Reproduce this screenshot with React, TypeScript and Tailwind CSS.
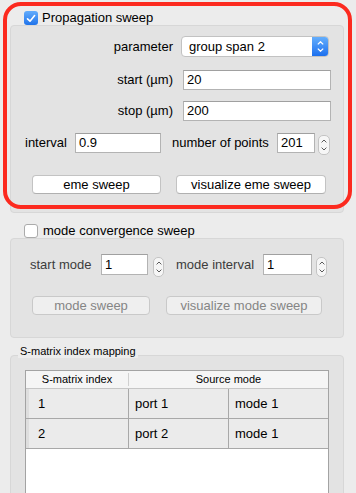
import React from "react";

function CheckedBox() {
  return (
    <div className="w-[14px] h-[14px] rounded-[3px] bg-gradient-to-b from-[#62acfc] to-[#1f73ea] flex items-center justify-center shrink-0">
      <svg width="10" height="9" viewBox="0 0 10 9">
        <path d="M1.5 4.8 L4 7.2 L8.6 1.6" stroke="white" strokeWidth="1.6" fill="none" strokeLinecap="round" strokeLinejoin="round" />
      </svg>
    </div>
  );
}

function EmptyBox() {
  return <div className="w-[14px] h-[14px] rounded-[3px] bg-white border border-[#ababab] shrink-0" />;
}

function Stepper({ className }: { className: string }) {
  return (
    <div className={"flex flex-col items-center justify-between h-[20px] rounded-[5px] border border-[#c4c4c4] bg-[#f6f6f6] py-[3px] shrink-0 " + className}>
      <svg width="6" height="4" viewBox="0 0 6 4">
        <path d="M0.6 3.4 L3 1 L5.4 3.4" stroke="#5a5a5a" fill="none" strokeWidth="1" />
      </svg>
      <svg width="6" height="4" viewBox="0 0 6 4">
        <path d="M0.6 0.6 L3 3 L5.4 0.6" stroke="#5a5a5a" fill="none" strokeWidth="1" />
      </svg>
    </div>
  );
}

function Input({ value, className }: { value: string; className: string }) {
  return (
    <div className={"h-[20px] bg-white border border-[#b3b3b3] border-t-[#a0a0a0] flex items-center pl-[3px] text-[13px] text-black shrink-0 " + className}>
      {value}
    </div>
  );
}

function Button({ label, className, disabled }: { label: string; className: string; disabled?: boolean }) {
  return (
    <div
      className={
        "h-[19px] rounded-[4px] border flex items-center justify-center text-[13px] shrink-0 " +
        (disabled
          ? "bg-[#efefef] border-[#c9c9c9] text-[#858585] "
          : "bg-white border-[#c3c3c3] border-b-[#b0b0b0] text-black ") +
        className
      }
    >
      {label}
    </div>
  );
}

export default function App() {
  return (
    <div className="relative w-[356px] h-[493px] overflow-hidden bg-[#ececec] font-['Liberation_Sans',Arial,sans-serif] text-[13px] text-black">
      <div className="pt-[11px]">
        {/* Section 1 title */}
        <div className="flex items-center h-[14px] pl-[24px] gap-[4px]">
          <CheckedBox />
          <span className="leading-[14px]">Propagation sweep</span>
        </div>
        {/* Panel 1 */}
        <div className="ml-[10px] w-[334px] h-[188px] bg-[#e3e3e3] border border-[#d7d7d7] rounded-[4px] pt-[10px]">
          <div className="flex items-center h-[21px]">
            <span className="w-[162px] text-right">parameter</span>
            <div className="ml-[8px] w-[148px] h-[21px] rounded-[4px] border border-[#c2c2c2] bg-white flex overflow-hidden">
              <span className="flex-1 pl-[7px] leading-[19px]">group span 2</span>
              <div className="w-[16px] h-full bg-gradient-to-b from-[#64aefc] to-[#1b6fee] flex flex-col items-center justify-center gap-[3px]">
                <svg width="7" height="4" viewBox="0 0 7 4">
                  <path d="M0.8 3.4 L3.5 0.8 L6.2 3.4" stroke="white" fill="none" strokeWidth="1.3" />
                </svg>
                <svg width="7" height="4" viewBox="0 0 7 4">
                  <path d="M0.8 0.6 L3.5 3.2 L6.2 0.6" stroke="white" fill="none" strokeWidth="1.3" />
                </svg>
              </div>
            </div>
          </div>
          <div className="flex items-center h-[20px] mt-[13px]">
            <span className="w-[162px] text-right">start (µm)</span>
            <Input value="20" className="ml-[10px] w-[148px]" />
          </div>
          <div className="flex items-center h-[20px] mt-[11px]">
            <span className="w-[162px] text-right">stop (µm)</span>
            <Input value="200" className="ml-[10px] w-[148px]" />
          </div>
          <div className="flex items-center h-[20px] mt-[12px] pl-[14px]">
            <span className="w-[50px]">interval</span>
            <Input value="0.9" className="w-[86px]" />
            <span className="w-[116px] pl-[11px]">number of points</span>
            <Input value="201" className="w-[38px]" />
            <Stepper className="ml-[3px] w-[12px] mt-[4px]" />
          </div>
          <div className="flex items-center h-[19px] mt-[22px]">
            <Button label="eme sweep" className="ml-[21px] w-[129px]" />
            <Button label="visualize eme sweep" className="ml-[15px] w-[150px]" />
          </div>
        </div>

        {/* Section 2 title */}
        <div className="flex items-center h-[15px] pl-[24px] gap-[5px] mt-[10px]">
          <EmptyBox />
          <span className="leading-[15px]">mode convergence sweep</span>
        </div>
        {/* Panel 2 */}
        <div className="ml-[10px] w-[334px] h-[100px] bg-[#e3e3e3] border border-[#d7d7d7] rounded-[4px] pt-[15px]">
          <div className="flex items-center h-[21px] pl-[19px]">
            <span className="w-[71px] text-[#3c3c3c]">start mode</span>
            <Input value="1" className="w-[47px] h-[21px]" />
            <Stepper className="ml-[5px] w-[11px] mt-[4px]" />
            <span className="w-[99px] pl-[12px] text-[#3c3c3c]">mode interval</span>
            <Input value="1" className="w-[49px] h-[21px]" />
            <Stepper className="ml-[4px] w-[11px] mt-[4px]" />
          </div>
          <div className="flex items-center h-[19px] mt-[21px]">
            <Button label="mode sweep" className="ml-[21px] w-[118px]" disabled />
            <Button label="visualize mode sweep" className="ml-[16px] w-[156px]" disabled />
          </div>
        </div>

        {/* Section 3 */}
        <div className="relative z-10 w-fit ml-[18px] mt-[7px] px-[2px] bg-[#ececec] text-[11px] leading-[13px]">
          S-matrix index mapping
        </div>
        <div className="ml-[10px] w-[334px] h-[200px] -mt-[3px] bg-[#e3e3e3] border border-[#d7d7d7] rounded-[4px] pt-[14px]">
          <div className="ml-[14px] w-[304px] h-[180px] bg-white border border-[#a3a3a3] border-b-0">
            <div className="flex h-[18px] bg-[#f5f5f5] border-b border-[#c6c6c6] text-[11px] items-center">
              <div className="w-[103px] text-center border-r border-[#d0d0d0] h-[13px] leading-[13px]">S-matrix index</div>
              <div className="flex-1 text-center leading-[13px]">Source mode</div>
            </div>
            {[
              ["1", "port 1", "mode 1"],
              ["2", "port 2", "mode 1"],
            ].map((r) => (
              <div key={r[0]} className="flex h-[30px] bg-[#ebebeb] border-b border-[#a8a8a8]">
                <div className="w-[103px] flex items-center pl-[9px] border-r border-[#a8a8a8] border-l-[3px] border-l-[#dedede]">{r[0]}</div>
                <div className="w-[100px] flex items-center pl-[6px] border-r border-[#a8a8a8]">{r[1]}</div>
                <div className="flex-1 flex items-center pl-[6px]">{r[2]}</div>
              </div>
            ))}
          </div>
        </div>
      </div>

      {/* red highlight */}
      <div className="absolute left-[3px] top-[2px] w-[349px] h-[207px] border-[4px] border-[#fc2a1f] rounded-[18px] pointer-events-none" />
    </div>
  );
}
